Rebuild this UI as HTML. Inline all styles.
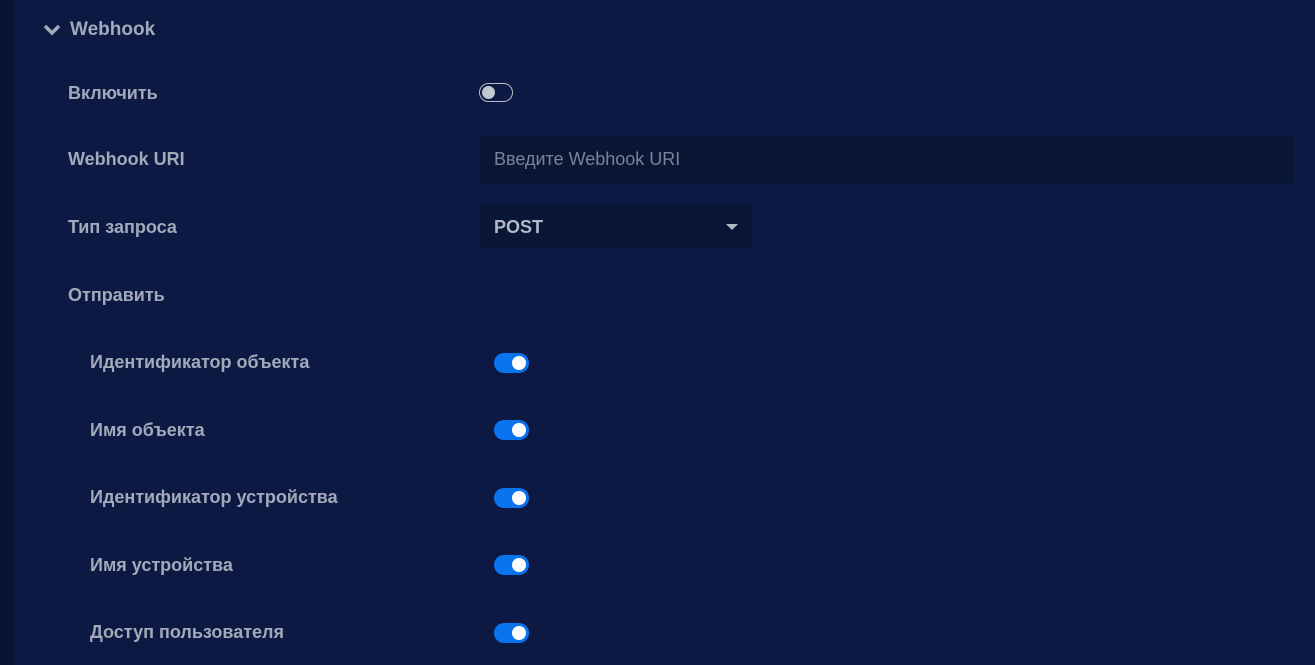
<!DOCTYPE html>
<html><head><meta charset="utf-8"><style>
body{margin:0;width:1315px;height:665px;background:#0c1a43;font-family:"Liberation Sans",sans-serif;position:relative;overflow:hidden}
.strip{position:absolute;left:0;top:0;width:14px;height:665px;background:#081434}
.t{position:absolute;color:#a3a9ba;font-size:18px;line-height:20px;font-weight:bold}
.h{font-weight:bold;color:#a3a9ba;font-size:19px}
.tg{position:absolute;width:35px;height:20px;border-radius:10px;background:#0a74f0}
.tg::after{content:"";position:absolute;right:3px;top:3px;width:14px;height:14px;border-radius:50%;background:#fff}
.off{position:absolute;left:479px;top:83px;width:32px;height:17px;border:1.5px solid #b8bdc8;border-radius:10px}
.off::after{content:"";position:absolute;left:2px;top:2px;width:13px;height:13px;border-radius:50%;background:#c3c7d0}
.box{position:absolute;background:#0a1636;border-radius:3px}
</style></head><body>
<div class="strip"></div>
<svg style="position:absolute;left:43px;top:23px" width="18" height="14" viewBox="0 0 18 14"><path d="M2 3l7 7 7-7" stroke="#a3a9ba" stroke-width="3.5" fill="none"/></svg>
<div class="t h" style="left:70px;top:20px">Webhook</div>
<div class="t" style="left:68px;top:83px">Включить</div>
<div class="off"></div>
<div class="t" style="left:68px;top:149px">Webhook URI</div>
<div class="box" style="left:479px;top:136px;width:815px;height:47px"></div>
<div class="t" style="left:494px;top:149px;color:#7c8397;font-weight:normal">Введите Webhook URI</div>
<div class="t" style="left:68px;top:217px">Тип запроса</div>
<div class="box" style="left:479px;top:205px;width:274px;height:44px"></div>
<div class="t" style="left:494px;top:217px;color:#b3b8c6">POST</div>
<svg style="position:absolute;left:726px;top:224px" width="12" height="8"><path d="M0 0h12L6 6z" fill="#b3b8c6"/></svg>
<div class="t" style="left:68px;top:285px">Отправить</div>
<div class="t" style="left:90px;top:352px">Идентификатор объекта</div><div class="tg" style="left:494px;top:353px"></div>
<div class="t" style="left:90px;top:420px">Имя объекта</div><div class="tg" style="left:494px;top:420px"></div>
<div class="t" style="left:90px;top:487px">Идентификатор устройства</div><div class="tg" style="left:494px;top:488px"></div>
<div class="t" style="left:90px;top:555px">Имя устройства</div><div class="tg" style="left:494px;top:555px"></div>
<div class="t" style="left:90px;top:622px">Доступ пользователя</div><div class="tg" style="left:494px;top:623px"></div>
</body></html>
